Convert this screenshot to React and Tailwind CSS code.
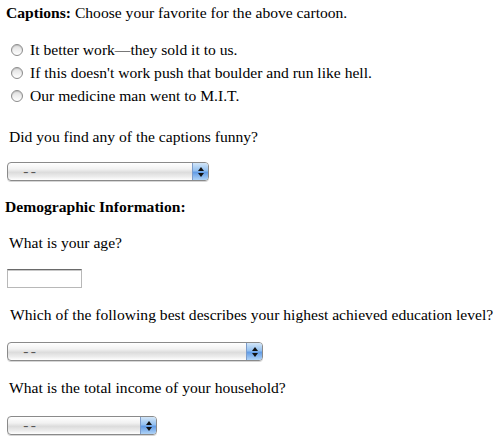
import React from "react";

function Select({ width }) {
  return (
    <div
      className="relative flex items-center h-[19px] rounded-[4px] border border-[#8a8a8a] bg-[linear-gradient(to_bottom,#ffffff_0%,#f2f2f2_35%,#dcdcdc_55%,#ececec_80%,#ffffff_100%)] shadow-[0_1px_0_#d6d6d6]"
      style={{ width }}
    >
      <span className="ml-[15px] text-[13px] leading-[17px] text-[#555] font-['Liberation_Sans',sans-serif] tracking-[1.5px] scale-x-[1.3] origin-left">
        --
      </span>
      <div className="absolute right-0 top-0 bottom-0 w-[16px] rounded-r-[3px] border-l border-[#7c9ccb] bg-[linear-gradient(to_bottom,#d3e6f8_0%,#93c0f0_45%,#629ce6_55%,#b0d3f6_100%)] flex flex-col items-center justify-center gap-[2px]">
        <svg width="6" height="4" viewBox="0 0 6 4"><path d="M3 0 L6 4 L0 4 Z" fill="#111" /></svg>
        <svg width="6" height="4" viewBox="0 0 6 4"><path d="M0 0 L6 0 L3 4 Z" fill="#111" /></svg>
      </div>
    </div>
  );
}

function Radio({ label }) {
  return (
    <div className="flex items-center h-[23px]">
      <span className="ml-[11px] w-[12px] h-[12px] rounded-full border border-[#8c8c8c] bg-[linear-gradient(to_bottom,#dedede,#ffffff)] shadow-[inset_0_1px_1px_rgba(0,0,0,0.15)]" />
      <span className="ml-[7px]">{label}</span>
    </div>
  );
}

export default function App() {
  return (
    <div className="w-[502px] h-[443px] overflow-hidden bg-white text-black font-['Liberation_Serif',serif] text-[15.6px] leading-[18px] whitespace-nowrap">
      <div className="pt-[4px] pl-[6px]">
        <b>Captions:</b> Choose your favorite for the above cartoon.
      </div>
      <div className="mt-[16px]">
        <Radio label="It better work—they sold it to us." />
        <Radio label="If this doesn't work push that boulder and run like hell." />
        <Radio label="Our medicine man went to M.I.T." />
      </div>
      <div className="mt-[21px] pl-[9px]">Did you find any of the captions funny?</div>
      <div className="mt-[16px] pl-[7px]">
        <Select width={202} />
      </div>
      <div className="mt-[17px] pl-[5px] font-bold">Demographic Information:</div>
      <div className="mt-[18px] pl-[9px]">What is your age?</div>
      <div className="mt-[17px] pl-[7px]">
        <div className="w-[75px] h-[19px] border border-[#b8b8b8] border-t-[#6a6a6a] bg-white shadow-[inset_0_1px_0_#c8c8c8]" />
      </div>
      <div className="mt-[18px] pl-[10px]">Which of the following best describes your highest achieved education level?</div>
      <div className="mt-[18px] pl-[7px]">
        <Select width={256} />
      </div>
      <div className="mt-[18px] pl-[9px]">What is the total income of your household?</div>
      <div className="mt-[19px] pl-[7px]">
        <Select width={150} />
      </div>
    </div>
  );
}
